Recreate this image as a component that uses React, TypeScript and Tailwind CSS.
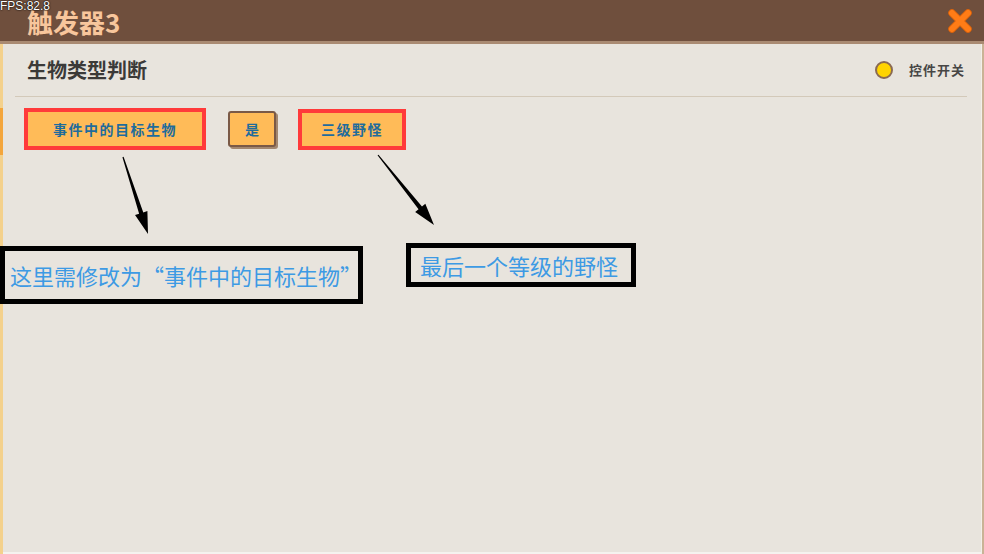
import React from "react";

const cjk = "font-['Noto_Sans_CJK_SC','Noto_Sans',sans-serif]";

// tapered arrow: thin tail, filled triangular head
const arrowPoints = (x1: number, y1: number, x2: number, y2: number) => {
  const dx = x2 - x1;
  const dy = y2 - y1;
  const len = Math.hypot(dx, dy);
  const ux = dx / len;
  const uy = dy / len;
  const nx = -uy;
  const ny = ux;
  const headLen = 22;
  const headW = 6.5;
  const bx = x2 - ux * headLen;
  const by = y2 - uy * headLen;
  const tail = 0.6;
  const shaft = 2.2;
  const pts = [
    [x1 + nx * tail, y1 + ny * tail],
    [bx + nx * shaft, by + ny * shaft],
    [bx + nx * headW, by + ny * headW],
    [x2, y2],
    [bx - nx * headW, by - ny * headW],
    [bx - nx * shaft, by - ny * shaft],
    [x1 - nx * tail, y1 - ny * tail],
  ];
  return pts.map((p) => p.join(",")).join(" ");
};

const OrangeTag = ({ label, className }: { label: string; className: string }) => (
  <div className={`border-4 border-[#ff3a3a] bg-[#ffbb58] flex items-center justify-center ${className}`}>
    <span className="text-[14px] font-bold tracking-[1.5px] text-[#1f6c9c]">{label}</span>
  </div>
);

export default function App() {
  return (
    <div className={`relative w-[984px] h-[554px] overflow-hidden bg-[#e8e4dd] flex flex-col ${cjk}`}>
      {/* title bar */}
      <div className="h-[44px] shrink-0 bg-[#6f4f3d] border-b-[3px] border-[#a98a72] flex items-center justify-between pl-[27px] pr-[11px]">
        <span className="text-[26px] font-bold leading-none text-[#f8c69c] pt-[2px]">触发器3</span>
        <svg width="26" height="26" viewBox="0 0 26 26">
          <path d="M5 5 L21 21 M21 5 L5 21" stroke="#d9620c" strokeWidth="7.5" strokeLinecap="round" />
          <path d="M5 5 L21 21 M21 5 L5 21" stroke="#ff7c16" strokeWidth="6" strokeLinecap="round" />
        </svg>
      </div>

      {/* body */}
      <div className="flex-1 flex">
        <div className="w-[3px] flex flex-col">
          <div className="h-[64px] bg-[#f4d18c]" />
          <div className="h-[47px] bg-[#f4a63c]" />
          <div className="flex-1 bg-[#f4d18c]" />
        </div>

        <div className="flex-1 flex flex-col border-b-2 border-[#f5f3ef]">
          <div className="h-[52px] flex items-center justify-between pl-[24px] pr-[16px]">
            <span className="text-[20px] font-bold text-[#3b3a38] leading-none">生物类型判断</span>
            <div className="flex items-center gap-[16px]">
              <div className="w-[18px] h-[18px] rounded-full bg-[#ffd400] border-2 border-[#8a6a52]" />
              <span className="text-[13px] font-bold tracking-[1px] text-[#474645]">控件开关</span>
            </div>
          </div>
          <div className="h-px bg-[#d3c9b9] ml-[12px] mr-[14px]" />

          <div className="flex items-center gap-[22px] ml-[21px] mt-[11px]">
            <OrangeTag label="事件中的目标生物" className="w-[182px] h-[42px]" />
            <div className="w-[48px] h-[36px] rounded-[3px] border-2 border-[#7a5946] bg-[#ffbb58] shadow-[2px_2px_0_#a3876f] flex items-center justify-center">
              <span className="text-[14px] font-bold text-[#1f6c9c]">是</span>
            </div>
            <OrangeTag label="三级野怪" className="w-[108px] h-[41px]" />
          </div>
        </div>

        <div className="w-[3px] bg-[#c9b396] border-l border-[#f2efe9]" />
      </div>

      {/* FPS counter */}
      <span className="absolute top-0 left-0 text-[12px] leading-none font-['Liberation_Sans',sans-serif] text-white [text-shadow:0_0_2px_#000,0_0_1px_#000]">
        FPS:82.8
      </span>

      {/* annotation layer */}
      <svg className="absolute inset-0 pointer-events-none" width="984" height="554">
        <polygon points={arrowPoints(123, 157, 148, 234)} fill="#000" />
        <polygon points={arrowPoints(378, 155, 434, 225)} fill="#000" />
      </svg>
      <div className="absolute left-0 top-[246px] w-[363px] h-[58px] border-[5px] border-black flex items-center pl-[5px]">
        <span className="text-[22px] leading-none text-[#3d9ae4] whitespace-nowrap">这里需修改为“事件中的目标生物”</span>
      </div>
      <div className="absolute left-[406px] top-[243px] w-[230px] h-[44px] border-[5px] border-black flex items-center pl-[9px]">
        <span className="text-[22px] leading-none text-[#3d9ae4] whitespace-nowrap">最后一个等级的野怪</span>
      </div>
    </div>
  );
}
